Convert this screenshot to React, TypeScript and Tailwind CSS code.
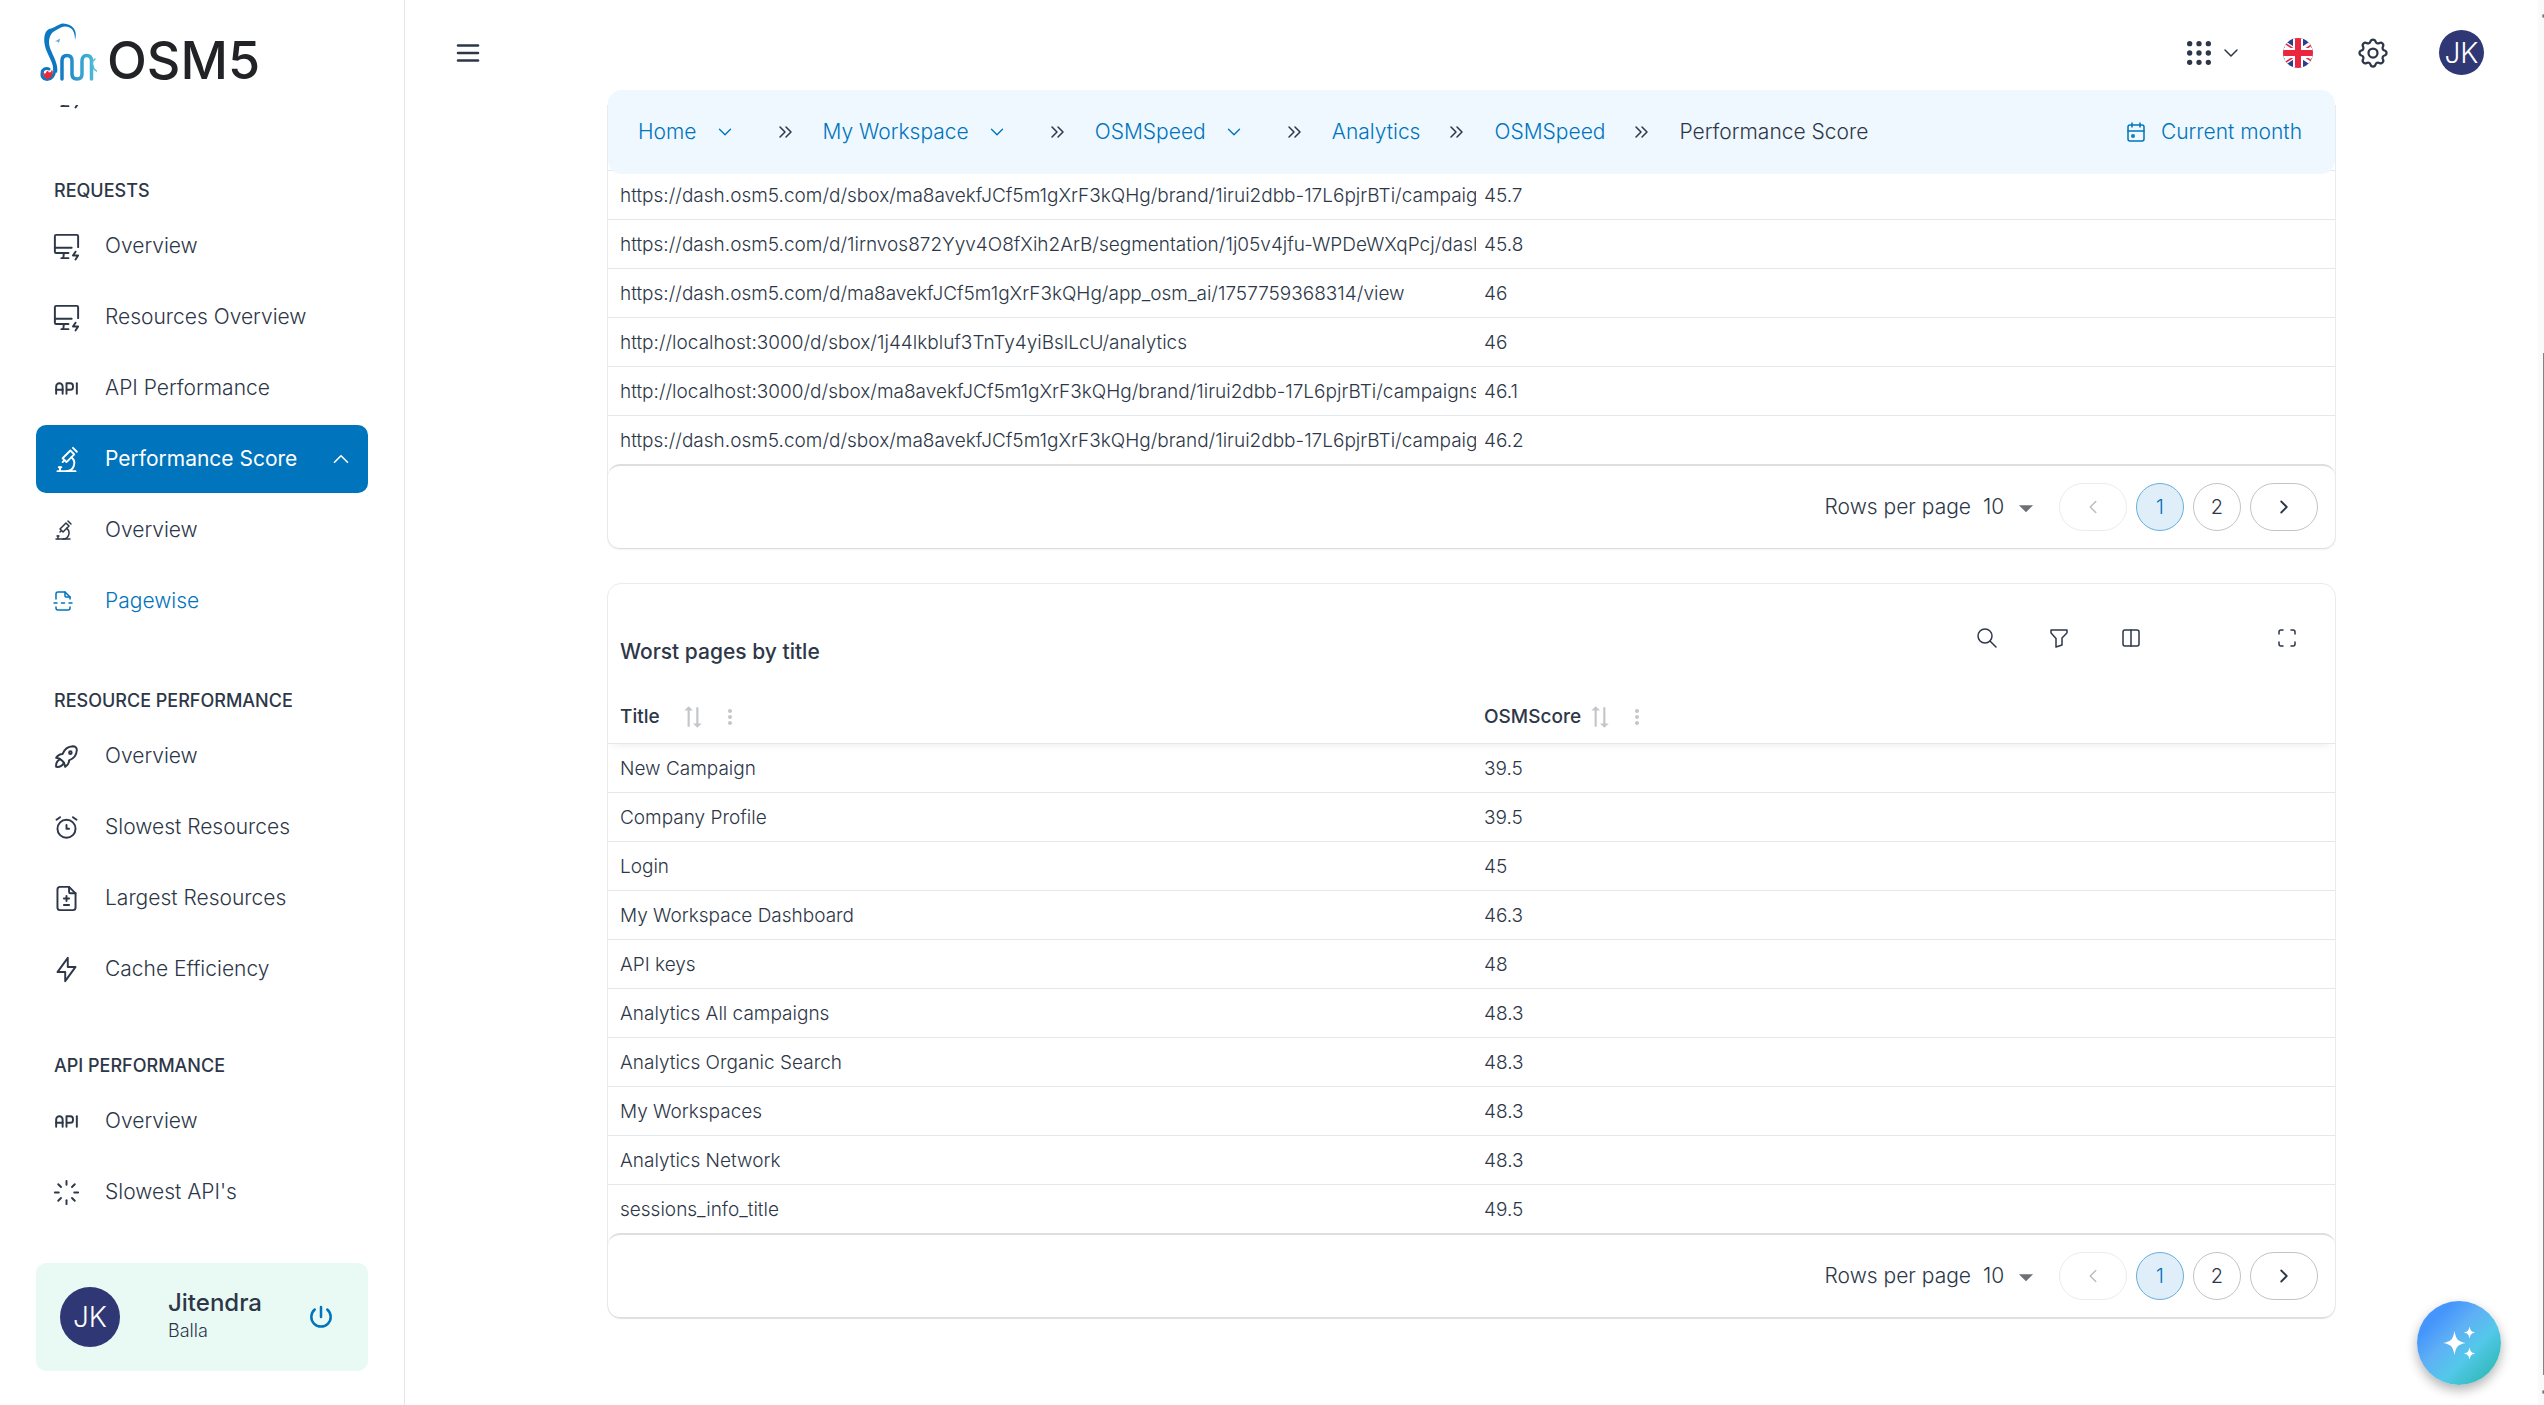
import React from 'react';
import type { IconType } from 'react-icons';
import {
  TbAlarm,
  TbApi,
  TbBolt,
  TbCalendarEvent,
  TbChevronDown,
  TbChevronLeft,
  TbChevronRight,
  TbChevronsRight,
  TbChevronUp,
  TbDeviceImacBolt,
  TbFileDiff,
  TbFilter,
  TbGridDots,
  TbLayoutColumns,
  TbLoader,
  TbMaximize,
  TbMenu2,
  TbMicroscope,
  TbPageBreak,
  TbPower,
  TbRocket,
  TbSearch,
  TbSettings,
} from 'react-icons/tb';
import { MdArrowDropDown, MdMoreVert, MdSyncAlt } from 'react-icons/md';

interface NavItem {
  label: string;
  icon: IconType;
  sub?: boolean;
  open?: boolean;
  current?: boolean;
}

interface NavSection {
  title: string;
  items: NavItem[];
}

interface Row {
  name: string;
  score: string;
}

const sections: NavSection[] = [
  {
    title: 'REQUESTS',
    items: [
      { label: 'Overview', icon: TbDeviceImacBolt },
      { label: 'Resources Overview', icon: TbDeviceImacBolt },
      { label: 'API Performance', icon: TbApi },
      { label: 'Performance Score', icon: TbMicroscope, open: true },
      { label: 'Overview', icon: TbMicroscope, sub: true },
      { label: 'Pagewise', icon: TbPageBreak, sub: true, current: true },
    ],
  },
  {
    title: 'RESOURCE PERFORMANCE',
    items: [
      { label: 'Overview', icon: TbRocket },
      { label: 'Slowest Resources', icon: TbAlarm },
      { label: 'Largest Resources', icon: TbFileDiff },
      { label: 'Cache Efficiency', icon: TbBolt },
    ],
  },
  {
    title: 'API PERFORMANCE',
    items: [
      { label: 'Overview', icon: TbApi },
      { label: "Slowest API's", icon: TbLoader },
    ],
  },
];

const urlRows: Row[] = [
  { name: 'https://dash.osm5.com/d/sbox/ma8avekfJCf5m1gXrF3kQHg/brand/1irui2dbb-17L6pjrBTi/campaig', score: '45.7' },
  { name: 'https://dash.osm5.com/d/1irnvos872Yyv4O8fXih2ArB/segmentation/1j05v4jfu-WPDeWXqPcj/dash', score: '45.8' },
  { name: 'https://dash.osm5.com/d/ma8avekfJCf5m1gXrF3kQHg/app_osm_ai/1757759368314/view', score: '46' },
  { name: 'http://localhost:3000/d/sbox/1j44lkbluf3TnTy4yiBslLcU/analytics', score: '46' },
  { name: 'http://localhost:3000/d/sbox/ma8avekfJCf5m1gXrF3kQHg/brand/1irui2dbb-17L6pjrBTi/campaigns', score: '46.1' },
  { name: 'https://dash.osm5.com/d/sbox/ma8avekfJCf5m1gXrF3kQHg/brand/1irui2dbb-17L6pjrBTi/campaig', score: '46.2' },
];

const titleRows: Row[] = [
  { name: 'New Campaign', score: '39.5' },
  { name: 'Company Profile', score: '39.5' },
  { name: 'Login', score: '45' },
  { name: 'My Workspace Dashboard', score: '46.3' },
  { name: 'API keys', score: '48' },
  { name: 'Analytics All campaigns', score: '48.3' },
  { name: 'Analytics Organic Search', score: '48.3' },
  { name: 'My Workspaces', score: '48.3' },
  { name: 'Analytics Network', score: '48.3' },
  { name: 'sessions_info_title', score: '49.5' },
];

const crumbs = [
  { label: 'Home', menu: true },
  { label: 'My Workspace', menu: true },
  { label: 'OSMSpeed', menu: true },
  { label: 'Analytics' },
  { label: 'OSMSpeed' },
];

const Logo: React.FC = () => (
  <a href="#" className="flex items-end gap-2 pl-[39px] pt-[22px]">
    <svg width="60" height="60" viewBox="39 22 60 60" fill="none" strokeLinecap="round">
      <defs>
        <linearGradient id="legs" x1="60" y1="0" x2="97" y2="0" gradientUnits="userSpaceOnUse">
          <stop offset="0" stopColor="#1279c4" />
          <stop offset="1" stopColor="#4fc0d8" />
        </linearGradient>
      </defs>
      <path
        d="M75 40C78 31 73 24 63 23.500C58 24 55 28 49 29C43 32 43 43 47 52C50 59 54 65 53 70L57 73C59 65 53 56 50 48C48 42 49 36 53 32C57 30 60 27 65 26.500C72 27 75 31 75 40Z"
        fill="#0b78c1"
      />
      <path d="M55 70C54 76 51 79.500 47 79.500C43 79.500 41.500 76 42 73C42.500 69 46 67.500 49 69" stroke="#0b78c1" strokeWidth="3" />
      <path d="M43.500 73C45 76 46 73 47.500 71C49 74 51 73 52 70.500C53 75 50.500 78.500 47.500 78.500C45 78.500 43.500 76 43.500 73Z" fill="#e9283b" stroke="#e9283b" />
      <path d="M55 41.500L60 38.500L59 43L57.500 41.500Z" fill="#5aa9dc" />
      <path
        d="M62 79V61C62 57.500 64 55.500 67 55.500C70 55.500 72 57.500 72 61V74C72 77.500 74 79 77 79C80 79 82 77.500 82 74V61C82 57.500 84 55.500 86.500 55.500C89.500 55.500 91.500 57.500 91.500 61V79"
        stroke="url(#legs)"
        strokeWidth="3.500"
      />
      <path d="M92 62L95 59M92 63L94 69L96.500 71" stroke="#4fc0d8" strokeWidth="1.500" />
    </svg>
    <span className="text-[52px] leading-[42px] font-medium text-[#222327]">OSM5</span>
  </a>
);

const SidebarItem: React.FC<{ item: NavItem }> = ({ item }) => {
  const Icon = item.icon;
  const tone = item.open
    ? 'bg-[#0074bc] text-white font-normal'
    : item.current
      ? 'text-[#0074bc] font-light'
      : 'text-[#2d3748] font-light';

  return (
    <a href="#" className={`flex h-[68px] items-center rounded-[10px] pl-[15px] pr-[18px] text-[21px] ${tone}`}>
      <span className="flex w-[54px] shrink-0">
        <Icon size={item.sub ? 24 : 31} strokeWidth={1.5} />
      </span>
      <span className="grow whitespace-nowrap">{item.label}</span>
      {item.open && <TbChevronUp size={26} strokeWidth={1.5} className="-mr-1" />}
    </a>
  );
};

const Sidebar: React.FC = () => (
  <aside className="flex w-[405px] shrink-0 flex-col border-r border-[#dfe6ec] bg-white">
    <div className="h-[105px] shrink-0">
      <Logo />
    </div>
    <nav className="grow overflow-hidden px-9">
      {/* scrolled so that only the foot of the item above is left in view */}
      <div className="-mt-[45px] flex h-[68px] items-center pl-[15px] text-[#2d3748]">
        <TbDeviceImacBolt size={31} strokeWidth={1.5} />
      </div>
      {sections.map((section) => (
        <section key={section.title} className="first-of-type:pb-[3px]">
          <h2 className="flex h-[84px] items-center pl-[18px] pt-10 text-[18px] font-medium text-[#2d3748]">
            {section.title}
          </h2>
          <div className="space-y-[3px]">
            {section.items.map((item, i) => (
              <SidebarItem key={i} item={item} />
            ))}
          </div>
        </section>
      ))}
    </nav>
    <div className="mx-9 mb-[34px] flex h-[108px] shrink-0 items-center rounded-[10px] bg-[#e9faf5] pl-6 pr-8">
      <span className="flex size-[60px] items-center justify-center rounded-full bg-[#2f3774] text-[28px] font-light text-white">
        JK
      </span>
      <div className="ml-12 grow text-[#2d3748]">
        <p className="text-[24px] leading-7 font-medium">Jitendra</p>
        <p className="text-[18px] leading-7 font-light">Balla</p>
      </div>
      <button aria-label="Log out" className="text-[#0074bc]">
        <TbPower size={30} strokeWidth={2} />
      </button>
    </div>
  </aside>
);

const Flag: React.FC = () => (
  <svg width="30" height="30" viewBox="0 0 30 30">
    <defs>
      <clipPath id="round">
        <circle cx="15" cy="15" r="15" />
      </clipPath>
    </defs>
    <g clipPath="url(#round)">
      <rect width="30" height="30" fill="#29408f" />
      <path d="M-3 3L33 27M-3 27L33 3" stroke="#fff" strokeWidth="6" />
      <path d="M-3 2L33 26M-3 28L33 4" stroke="#e9283f" strokeWidth="1.500" />
      <path d="M15 0V30M0 15H30" stroke="#fff" strokeWidth="10" />
      <path d="M15 0V30M0 15H30" stroke="#e9283f" strokeWidth="6" />
    </g>
  </svg>
);

const TopBar: React.FC = () => (
  <header className="flex h-[90px] shrink-0 items-center pl-12 pr-[54px] pt-[15px] text-[#2d3748]">
    <button aria-label="Toggle menu">
      <TbMenu2 size={30} strokeWidth={2} />
    </button>
    <div className="ml-auto flex items-center">
      <button aria-label="Apps" className="flex items-center gap-1">
        <TbGridDots size={32} strokeWidth={2} />
        <TbChevronDown size={24} strokeWidth={1.5} />
      </button>
      <button aria-label="Language" className="ml-10">
        <Flag />
      </button>
      <button aria-label="Settings" className="ml-[42px]">
        <TbSettings size={36} strokeWidth={1.5} />
      </button>
      <button className="ml-12 flex size-[45px] items-center justify-center rounded-full bg-[#2f3774] text-[28px] font-light text-white">
        JK
      </button>
    </div>
  </header>
);

const Breadcrumb: React.FC = () => (
  <div className="relative z-10 mx-px flex h-[84px] items-center rounded-[14px] bg-[#eff8ff] pl-[30px] pr-[33px] text-[21px] font-light text-[#2d3748]">
    <nav className="flex items-center whitespace-nowrap">
      {crumbs.map((crumb, i) => (
        <React.Fragment key={i}>
          {crumb.menu ? (
            <button className="mr-[13px] flex items-center gap-[17px] text-[#0074bc]">
              {crumb.label}
              <TbChevronDown size={22} strokeWidth={1.5} />
            </button>
          ) : (
            <a href="#" className="text-[#0074bc]">
              {crumb.label}
            </a>
          )}
          <TbChevronsRight size={24} strokeWidth={1.5} className="mr-[26px] ml-6" />
        </React.Fragment>
      ))}
      <span>Performance Score</span>
    </nav>
    <button className="ml-auto flex items-center gap-[13px] text-[#0074bc]">
      <TbCalendarEvent size={24} strokeWidth={1.5} />
      Current month
    </button>
  </div>
);

const Rows: React.FC<{ rows: Row[] }> = ({ rows }) => (
  <tbody className="text-[19px] font-light text-[#2d3748]">
    {rows.map((row, i) => (
      <tr key={i} className="h-[49px] border-t border-[#e2e8ec]">
        <td className="overflow-hidden pl-3 pt-0.5 whitespace-nowrap">{row.name}</td>
        <td className="pl-2 pt-0.5">{row.score}</td>
      </tr>
    ))}
  </tbody>
);

const Columns: React.FC = () => (
  <colgroup>
    <col className="w-[868px]" />
    <col />
  </colgroup>
);

const Pager: React.FC<{ id: string }> = ({ id }) => (
  <div className="-mt-px flex h-[85px] items-center justify-end rounded-[12px] border-t-2 border-b border-[#dcdedf] pr-[17px] text-[21px] font-light text-[#2d3748] shadow-xs">
    <label htmlFor={id}>Rows per page</label>
    <div className="relative ml-2">
      <select id={id} className="w-[60px] appearance-none bg-transparent pl-1">
        <option>10</option>
      </select>
      <MdArrowDropDown size={34} className="pointer-events-none absolute -right-1 top-0 text-[#6e7077]" />
    </div>
    <div className="ml-[20px] flex gap-[9px] text-[20px]">
      <button disabled aria-label="Previous page" className="flex h-12 w-[68px] items-center justify-center rounded-full border border-[#ececec] text-[#b9bbbf]">
        <TbChevronLeft size={22} strokeWidth={1.5} />
      </button>
      <button className="size-12 rounded-full border border-[#66b0dc] bg-[#dfeef8] text-[#0074bc]">1</button>
      <button className="size-12 rounded-full border border-[#c4c4c8]">2</button>
      <button aria-label="Next page" className="flex h-12 w-[68px] items-center justify-center rounded-full border border-[#c4c4c8]">
        <TbChevronRight size={22} strokeWidth={2} />
      </button>
    </div>
  </div>
);

const Fab: React.FC = () => (
  <button
    aria-label="Assistant"
    className="fixed right-[43px] bottom-5 flex size-[84px] items-center justify-center rounded-full bg-[linear-gradient(135deg,#4596fc_22%,#5fb0f5_42%,#54c8ea_62%,#35bcc0_85%)] shadow-[0_5px_12px_rgba(0,0,0,0.3)]"
  >
    <svg width="40" height="40" viewBox="0 0 40 40" fill="#fff">
      <path d="M15.500 8C17 16 18.500 18.500 27 20C18.500 21.500 17 24 15.500 32C14 24 12.500 21.500 4 20C12.500 18.500 14 16 15.500 8Z" />
      <path d="M30.500 3.500C31.500 7.500 32 8.500 36 9.500C32 10.500 31.500 11.500 30.500 15.500C29.500 11.500 29 10.500 25 9.500C29 8.500 29.500 7.500 30.500 3.500Z" />
      <path d="M30.500 24.500C31.500 28.500 32 29.500 36 30.500C32 31.500 31.500 32.500 30.500 36.500C29.500 32.500 29 31.500 25 30.500C29 29.500 29.500 28.500 30.500 24.500Z" />
    </svg>
  </button>
);

const App: React.FC = () => {
  return (
    <div className="flex h-screen overflow-hidden bg-white font-[Inter,sans-serif] text-[#2d3748]">
      <Sidebar />
      <div className="flex min-w-0 grow flex-col">
        <TopBar />
        <main className="mx-auto w-full max-w-[1729px]">
          <Breadcrumb />

          <div className="-mt-[69px] rounded-b-[12px] border-x border-[#e9ebee] pt-[65px]">
            <table className="w-full table-fixed">
              <Columns />
              <Rows rows={urlRows} />
            </table>
            <Pager id="rows-url" />
          </div>

          <section className="mt-[34px] rounded-[14px] border border-[#e9ebee]">
            <div className="flex h-[105px] items-center pl-3 pr-9">
              <h2 className="pt-8 text-[21px] font-medium">Worst pages by title</h2>
              <div className="ml-auto flex items-center gap-12 pt-1">
                <button aria-label="Search">
                  <TbSearch size={24} strokeWidth={1.5} />
                </button>
                <button aria-label="Filter">
                  <TbFilter size={24} strokeWidth={1.5} />
                </button>
                <button aria-label="Columns">
                  <TbLayoutColumns size={24} strokeWidth={1.5} />
                </button>
                <button aria-label="Full screen" className="ml-[84px]">
                  <TbMaximize size={24} strokeWidth={1.5} />
                </button>
              </div>
            </div>
            <table className="w-full table-fixed">
              <Columns />
              <thead>
                <tr className="h-[55px] text-left text-[19px] shadow-[0_6px_8px_-5px_rgba(0,0,0,0.08)]">
                  <th className="pl-3 pt-0.5 font-medium">
                    <div className="flex items-center">
                      Title
                      <MdSyncAlt size={26} className="ml-5 -rotate-90 text-[#c3c6ca]" />
                      <MdMoreVert size={24} className="ml-3 text-[#c3c6ca]" />
                    </div>
                  </th>
                  <th className="pl-2 pt-0.5 font-medium">
                    <div className="flex items-center">
                      OSMScore
                      <MdSyncAlt size={26} className="ml-1.5 -rotate-90 text-[#c3c6ca]" />
                      <MdMoreVert size={24} className="ml-3 text-[#c3c6ca]" />
                    </div>
                  </th>
                </tr>
              </thead>
              <Rows rows={titleRows} />
            </table>
            <Pager id="rows-title" />
          </section>
        </main>
      </div>
      <div className="flex w-[6px] shrink-0 flex-col items-end bg-[#fafafa]">
        <div className="mt-[14px] h-1 w-0.5 rounded-l bg-[#808288]" />
        <div className="mt-[335px] mb-[15px] w-px grow bg-[#808288]" />
        <div className="mb-[11px] h-1 w-0.5 rounded-l bg-[#808288]" />
      </div>
      <Fab />
    </div>
  );
};

export default App;
